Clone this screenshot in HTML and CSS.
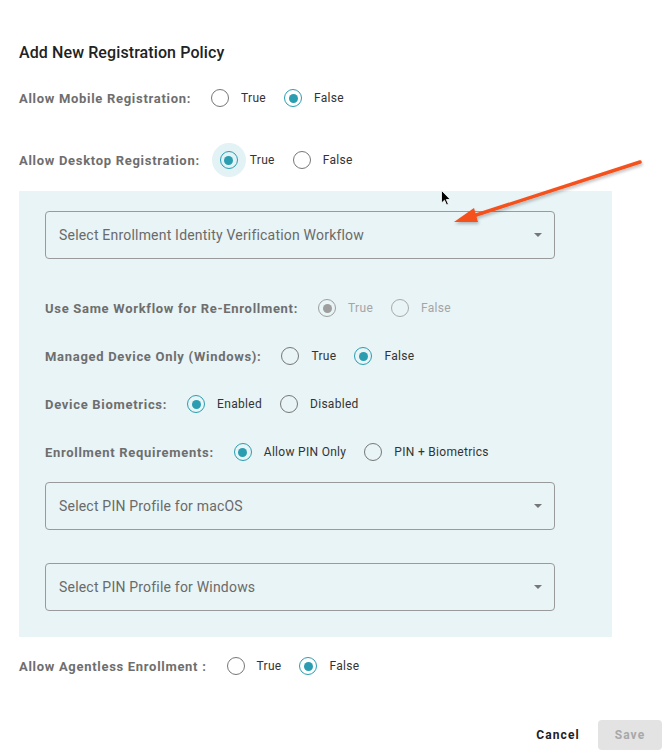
FILE: index.html
```html
<!DOCTYPE html>
<html>
<head>
<meta charset="utf-8">
<link rel="stylesheet" href="styles.css">
</head>
<body>
<div class="dialog">
  <h2 class="title">Add New Registration Policy</h2>

  <div class="row row-top">
    <span class="label">Allow Mobile Registration:</span>
    <span class="opt"><span class="radio"></span><span class="otext">True</span></span>
    <span class="opt"><span class="radio on"></span><span class="otext">False</span></span>
  </div>

  <div class="row row-top row-desktop">
    <span class="label">Allow Desktop Registration:</span>
    <span class="opt"><span class="radio on focus"></span><span class="otext">True</span></span>
    <span class="opt"><span class="radio"></span><span class="otext">False</span></span>
  </div>

  <div class="panel">
    <div class="select"><span class="ph">Select Enrollment Identity Verification Workflow</span><span class="caret"></span></div>

    <div class="row prow first">
      <span class="label">Use Same Workflow for Re-Enrollment:</span>
      <span class="opt disabled"><span class="radio on"></span><span class="otext">True</span></span>
      <span class="opt disabled"><span class="radio"></span><span class="otext">False</span></span>
    </div>
    <div class="row prow">
      <span class="label">Managed Device Only (Windows):</span>
      <span class="opt"><span class="radio"></span><span class="otext">True</span></span>
      <span class="opt"><span class="radio on"></span><span class="otext">False</span></span>
    </div>
    <div class="row prow">
      <span class="label">Device Biometrics:</span>
      <span class="opt"><span class="radio on"></span><span class="otext">Enabled</span></span>
      <span class="opt"><span class="radio"></span><span class="otext">Disabled</span></span>
    </div>
    <div class="row prow">
      <span class="label">Enrollment Requirements:</span>
      <span class="opt"><span class="radio on"></span><span class="otext">Allow PIN Only</span></span>
      <span class="opt"><span class="radio"></span><span class="otext">PIN + Biometrics</span></span>
    </div>

    <div class="select sel-mac"><span class="ph">Select PIN Profile for macOS</span><span class="caret"></span></div>
    <div class="select sel-win"><span class="ph">Select PIN Profile for Windows</span><span class="caret"></span></div>
  </div>

  <div class="row row-top row-agent">
    <span class="label">Allow Agentless Enrollment :</span>
    <span class="opt"><span class="radio"></span><span class="otext">True</span></span>
    <span class="opt"><span class="radio on"></span><span class="otext">False</span></span>
  </div>

  <div class="footer">
    <button class="btn cancel">Cancel</button>
    <button class="btn save" disabled>Save</button>
  </div>

  <svg class="overlay" width="665" height="755" viewBox="0 0 665 755">
    <defs>
      <filter id="sh" x="-20%" y="-20%" width="140%" height="140%">
        <feDropShadow dx="1" dy="2" stdDeviation="1.5" flood-color="#000" flood-opacity="0.25"/>
      </filter>
    </defs>
    <g filter="url(#sh)">
      <line x1="640" y1="162" x2="470" y2="217" stroke="#f4511e" stroke-width="3.5" stroke-linecap="round"/>
      <polygon points="454,222 474,208 478,222" fill="#f4511e"/>
    </g>
    <path d="M441.5 190.5 L441.5 203 L444.5 200.2 L446.6 205 L448.4 204.2 L446.3 199.5 L450.3 199.5 Z" fill="#000" stroke="#fff" stroke-width="0.8"/>
  </svg>
</div>
</body>
</html>
```

FILE: styles.css
```css
* { box-sizing: border-box; }
html, body { margin: 0; padding: 0; background: #fff; }
body {
  font-family: Roboto, "Noto Sans", "Liberation Sans", sans-serif;
  width: 665px;
  height: 755px;
  overflow: hidden;
}
.dialog {
  position: relative;
  padding: 0 19px;
  height: 755px;
}
.title {
  margin: 0;
  padding-top: 42px;
  font-size: 16px;
  line-height: 22px;
  font-weight: 500;
  color: #222;
  letter-spacing: 0.1px;
}
.row {
  display: flex;
  align-items: center;
  height: 40px;
}
.row-top { margin-top: 14px; }
.row-desktop { margin-top: 22px; }
.label {
  font-size: 13px;
  font-weight: 700;
  color: #6e6e6e;
  letter-spacing: 0.7px;
  margin-right: 20px;
}
.opt {
  display: flex;
  align-items: center;
  margin-right: 18px;
}
.radio {
  position: relative;
  width: 18px;
  height: 18px;
  border-radius: 50%;
  border: 1.5px solid #777;
  flex: none;
}
.radio.on { border-color: #2a9db0; }
.radio.on::after {
  content: "";
  position: absolute;
  left: 50%;
  top: 50%;
  width: 9px;
  height: 9px;
  margin: -4.5px 0 0 -4.5px;
  border-radius: 50%;
  background: #2a9db0;
}
.radio.focus {
  background: #e3f2f4;
  box-shadow: 0 0 0 8px #e3f2f4;
}
.otext {
  font-size: 12px;
  color: #333;
  margin-left: 12px;
  letter-spacing: 0.3px;
}
.opt.disabled .radio { border-color: #9e9e9e; }
.opt.disabled .radio.on::after { background: #9e9e9e; }
.opt.disabled .radio:not(.on) { border-color: #aaa; }
.opt.disabled .otext { color: #a5a5a5; }

.panel {
  margin-top: 11px;
  background: #e8f4f6;
  width: 593px;
  padding: 20px 57px 26px 26px;
}
.select {
  height: 48px;
  border: 1px solid #9a9a9a;
  border-radius: 4px;
  display: flex;
  align-items: center;
  padding: 0 12px 0 13px;
  justify-content: space-between;
}
.ph {
  font-size: 14px;
  color: #6a6a6a;
  letter-spacing: 0.2px;
}
.caret {
  width: 0;
  height: 0;
  border-left: 4.5px solid transparent;
  border-right: 4.5px solid transparent;
  border-top: 4.5px solid #777;
}
.prow { height: 48px; }
.prow.first { margin-top: 25px; }
.sel-mac { margin-top: 6px; }
.sel-win { margin-top: 33px; }
.row-agent { margin-top: 9px; }

.footer {
  position: absolute;
  right: 3px;
  top: 720px;
  display: flex;
  align-items: center;
  gap: 18px;
}
.btn {
  font-family: Roboto, "Noto Sans", "Liberation Sans", sans-serif;
  font-size: 12px;
  font-weight: 700;
  letter-spacing: 1.1px;
  border: none;
  background: transparent;
  height: 30px;
  border-radius: 4px;
  padding: 0;
}
.cancel { color: #222; width: 44px; }
.save {
  background: #e3e3e3;
  color: #a8a8a8;
  width: 64px;
}
.overlay {
  position: absolute;
  left: 0;
  top: 0;
  pointer-events: none;
}
```
